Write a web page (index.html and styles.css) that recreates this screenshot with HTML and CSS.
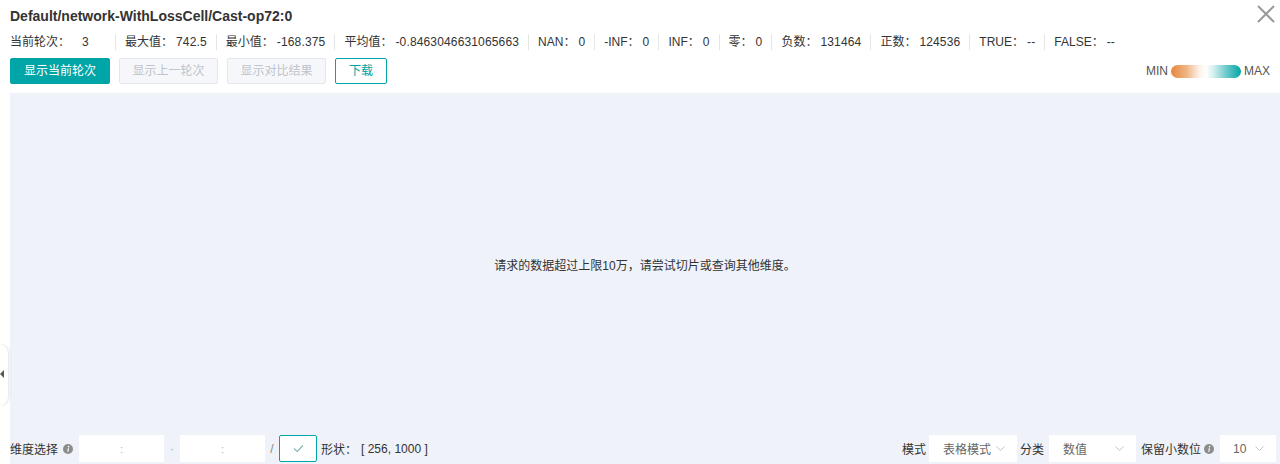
FILE: index.html
```html
<!DOCTYPE html>
<html lang="zh">
<head>
<meta charset="utf-8">
<title>Tensor</title>
<link rel="stylesheet" href="styles.css">
</head>
<body>
<div class="panel">
  <div class="title-row">
    <div class="title">Default/network-WithLossCell/Cast-op72:0</div>
    <svg class="close" width="18" height="18" viewBox="0 0 18 18"><path d="M1 1 L17 17 M17 1 L1 17" stroke="#9a9a9a" stroke-width="2" fill="none"/></svg>
  </div>
  <div class="stats">
    <div class="stat first"><span class="lbl">当前轮次：</span><span class="val v-first">3</span></div>
    <div class="stat"><span class="lbl">最大值：</span><span class="val">742.5</span></div>
    <div class="stat"><span class="lbl">最小值：</span><span class="val">-168.375</span></div>
    <div class="stat"><span class="lbl">平均值：</span><span class="val">-0.8463046631065663</span></div>
    <div class="stat"><span class="lbl">NAN：</span><span class="val">0</span></div>
    <div class="stat"><span class="lbl">-INF：</span><span class="val">0</span></div>
    <div class="stat"><span class="lbl">INF：</span><span class="val">0</span></div>
    <div class="stat"><span class="lbl">零：</span><span class="val">0</span></div>
    <div class="stat"><span class="lbl">负数：</span><span class="val">131464</span></div>
    <div class="stat"><span class="lbl">正数：</span><span class="val">124536</span></div>
    <div class="stat"><span class="lbl">TRUE：</span><span class="val">--</span></div>
    <div class="stat"><span class="lbl">FALSE：</span><span class="val">--</span></div>
  </div>
  <div class="toolbar">
    <div class="btns">
      <button class="btn primary w-first">显示当前轮次</button>
      <button class="btn disabled w-long">显示上一轮次</button>
      <button class="btn disabled w-long">显示对比结果</button>
      <button class="btn outline w-short">下载</button>
    </div>
    <div class="legend">
      <span>MIN</span>
      <span class="bar"></span>
      <span>MAX</span>
    </div>
  </div>
  <div class="stage">
    <div class="message">请求的数据超过上限10万，请尝试切片或查询其他维度。</div>
    <div class="bottom">
      <div class="left-controls">
        <span class="label">维度选择</span>
        <svg class="info info-l" width="10" height="10" viewBox="0 0 11 11"><circle cx="5.5" cy="5.5" r="5.5" fill="#8c8c8c"/><circle cx="6.1" cy="2.9" r="0.9" fill="#fff"/><path d="M5.3 4.6 L6.6 4.6 L5.9 8.6 L4.7 8.6 Z" fill="#fff"/></svg>
        <div class="dim-input"><span class="colon">:</span></div>
        <span class="dot">·</span>
        <div class="dim-input"><span class="colon">:</span></div>
        <span class="slash">/</span>
        <button class="check"><svg width="11" height="9" viewBox="0 0 11 9"><path d="M1 4.5 L4.2 7.5 L10 1.5" stroke="#7fb9ba" stroke-width="1.1" fill="none"/></svg></button>
        <span class="shape-lbl">形状：</span>
        <span class="shape">[ 256, 1000 ]</span>
      </div>
      <div class="right-controls">
        <span class="label">模式</span>
        <div class="select s-mode"><span>表格模式</span><svg class="chev" width="9" height="5" viewBox="0 0 9 5"><path d="M0.5 0.5 L4.5 4.5 L8.5 0.5" stroke="#c0c4cc" fill="none"/></svg></div>
        <span class="label">分类</span>
        <div class="select s-cat"><span>数值</span><svg class="chev" width="9" height="5" viewBox="0 0 9 5"><path d="M0.5 0.5 L4.5 4.5 L8.5 0.5" stroke="#c0c4cc" fill="none"/></svg></div>
        <span class="label">保留小数位</span>
        <svg class="info info-r" width="10" height="10" viewBox="0 0 11 11"><circle cx="5.5" cy="5.5" r="5.5" fill="#8c8c8c"/><circle cx="6.1" cy="2.9" r="0.9" fill="#fff"/><path d="M5.3 4.6 L6.6 4.6 L5.9 8.6 L4.7 8.6 Z" fill="#fff"/></svg>
        <div class="select s-dec"><span>10</span><svg class="chev" width="9" height="5" viewBox="0 0 9 5"><path d="M0.5 0.5 L4.5 4.5 L8.5 0.5" stroke="#c0c4cc" fill="none"/></svg></div>
      </div>
    </div>
  </div>
  <div class="handle"><span class="arrow"></span></div>
</div>
</body>
</html>
```

FILE: styles.css
```css
* { box-sizing: border-box; }
html, body {
  margin: 0;
  padding: 0;
  height: 464px;
  overflow: hidden;
  background: #fff;
  font-family: "Liberation Sans", Arial, "Noto Sans CJK SC", sans-serif;
  color: #333;
  font-size: 12px;
}
.panel {
  position: relative;
  height: 464px;
  padding-left: 10px;
  display: flex;
  flex-direction: column;
}
.title-row {
  height: 32px;
  display: flex;
  align-items: center;
  justify-content: space-between;
  padding-right: 5px;
}
.title {
  font-size: 14px;
  font-weight: bold;
  color: #333;
  line-height: 32px;
}
.close { margin-top: -5px; }
.stats {
  height: 20px;
  display: flex;
  align-items: center;
  white-space: nowrap;
}
.stat {
  display: flex;
  align-items: center;
  height: 16px;
  line-height: 16px;
  padding: 0 9px 0 9px;
  border-left: 1px solid #e6e6e6;
}
.stat.first { padding-left: 0; border-left: none; padding-right: 9px; }
.val { margin-left: 3px; letter-spacing: 0.15px; }
.v-first { margin-left: 12px; min-width: 24px; }
.toolbar {
  margin-top: 6px;
  height: 26px;
  display: flex;
  align-items: center;
  justify-content: space-between;
  padding-right: 10px;
}
.btns { display: flex; gap: 9px; }
.btn {
  height: 26px;
  padding: 0;
  border: 1px solid #00a5a7;
  border-radius: 2px;
  font-family: "Liberation Sans", "Noto Sans CJK SC", sans-serif;
  font-size: 12px;
  line-height: 24px;
  background: #fff;
  color: #00a5a7;
  text-align: center;
  cursor: pointer;
}
.w-first { width: 100px; }
.w-long { width: 99px; }
.w-short { width: 52px; }
.btn.primary { background: #00a5a7; color: #fff; }
.btn.disabled { background: #f5f7fa; border-color: #e4e7ed; color: #c0c4cc; }
.legend {
  display: flex;
  align-items: center;
  gap: 3px;
  color: #555;
  font-size: 12px;
}
.bar {
  display: inline-block;
  width: 70px;
  height: 13px;
  border-radius: 7px;
  background: linear-gradient(90deg, #e5873f 0%, #f0b483 22%, #fdf1e8 40%, #ffffff 50%, #d8f0f0 60%, #5cc4c5 82%, #00a5a7 100%);
}
.stage {
  margin-top: 9px;
  flex: 1;
  background: #eff2f8;
  display: flex;
  flex-direction: column;
}
.message {
  flex: 1;
  display: flex;
  align-items: center;
  justify-content: center;
  color: #333;
}
.bottom {
  height: 29px;
  display: flex;
  justify-content: space-between;
  align-items: flex-start;
  padding-right: 4px;
}
.left-controls, .right-controls {
  display: flex;
  align-items: center;
  height: 27px;
}
.label { color: #333; }
.info { margin-left: 4px; }
.info-l { margin-left: 5px; margin-right: 6px; }
.info-r { margin-left: 3px; }
.dim-input {
  width: 85px;
  height: 27px;
  background: #fff;
  display: flex;
  align-items: center;
  justify-content: center;
}
.colon { color: #b0b4bc; font-size: 11px; }
.dot { width: 16px; text-align: center; color: #b0b4bc; }
.slash { width: 14px; text-align: center; color: #888; }
.check {
  width: 38px;
  height: 27px;
  background: #fff;
  border: 1px solid #00a5a7;
  border-radius: 2px;
  display: flex;
  align-items: center;
  justify-content: center;
  padding: 0;
}
.shape-lbl { margin-left: 4px; }
.shape { margin-left: 4px; }
.select {
  height: 27px;
  background: #fff;
  display: flex;
  align-items: center;
  justify-content: space-between;
  padding: 0 12px 0 14px;
  color: #666;
}
.s-mode { width: 88px; margin: 0 3px; }
.s-cat { width: 87px; margin: 0 5px 0 5px; }
.s-dec { width: 56px; margin-left: 6px; padding-left: 13px; }
.handle {
  position: absolute;
  left: 0;
  top: 345px;
  width: 8px;
  height: 60px;
  background: #fff;
  border-radius: 0 8px 8px 0;
  box-shadow: 1px 0 3px rgba(0,0,0,0.12);
}
.arrow {
  position: absolute;
  left: 0;
  top: 25px;
  width: 0;
  height: 0;
  border-top: 4px solid transparent;
  border-bottom: 4px solid transparent;
  border-right: 4px solid #555;
}
```
